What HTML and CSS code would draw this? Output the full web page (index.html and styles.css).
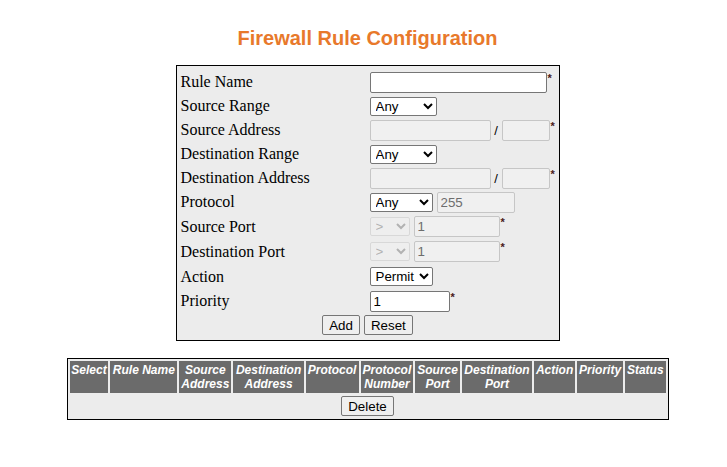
FILE: index.html
```html
<!DOCTYPE html>
<html>
<head>
<meta charset="utf-8">
<title>Firewall Rule Configuration</title>
<link rel="stylesheet" href="styles.css">
</head>
<body>
<h1 class="title">Firewall Rule Configuration</h1>
<table class="form">
  <tr><td class="lbl">Rule Name</td><td class="fld"><input type="text" class="in-name"><span class="req">*</span></td></tr>
  <tr><td class="lbl">Source Range</td><td class="fld"><select class="sel-any"><option>Any</option></select></td></tr>
  <tr><td class="lbl">Source Address</td><td class="fld"><input type="text" class="in-ip" disabled><span class="slash">/</span><input type="text" class="in-mask" disabled><span class="req">*</span></td></tr>
  <tr><td class="lbl">Destination Range</td><td class="fld"><select class="sel-any"><option>Any</option></select></td></tr>
  <tr><td class="lbl">Destination Address</td><td class="fld"><input type="text" class="in-ip" disabled><span class="slash">/</span><input type="text" class="in-mask" disabled><span class="req">*</span></td></tr>
  <tr><td class="lbl">Protocol</td><td class="fld"><select class="sel-proto"><option>Any</option></select><input type="text" class="in-proto" value="255" disabled></td></tr>
  <tr class="tall"><td class="lbl">Source Port</td><td class="fld"><select class="sel-op" disabled><option>&gt;</option></select><input type="text" class="in-port" value="1" disabled><span class="req">*</span></td></tr>
  <tr class="tall"><td class="lbl">Destination Port</td><td class="fld"><select class="sel-op" disabled><option>&gt;</option></select><input type="text" class="in-port" value="1" disabled><span class="req">*</span></td></tr>
  <tr class="tall"><td class="lbl">Action</td><td class="fld"><select class="sel-act"><option>Permit</option></select></td></tr>
  <tr><td class="lbl">Priority</td><td class="fld"><input type="text" class="in-prio" value="1"><span class="req">*</span></td></tr>
  <tr><td class="btns" colspan="2"><button class="btn">Add</button><button class="btn">Reset</button></td></tr>
</table>

<table class="list">
  <tr>
    <th>Select</th>
    <th>Rule Name</th>
    <th>Source<br>Address</th>
    <th>Destination<br>Address</th>
    <th>Protocol</th>
    <th>Protocol<br>Number</th>
    <th>Source<br>Port</th>
    <th>Destination<br>Port</th>
    <th>Action</th>
    <th>Priority</th>
    <th>Status</th>
  </tr>
  <tr><td class="list-btns" colspan="11"><button class="btn">Delete</button></td></tr>
</table>
</body>
</html>
```
FILE: styles.css
```css
html { background: #fff; }
body {
  margin: 8px 0 0 8px;
  font-family: "Liberation Serif", "Times New Roman", serif;
  font-size: 16px;
  color: #000;
}
.title {
  font-family: "Liberation Sans", Arial, sans-serif;
  font-size: 20px;
  font-weight: bold;
  color: #e8792b;
  text-align: center;
  margin: 19px 0 15px;
  line-height: 23px;
}
.form {
  margin: 0 auto;
  width: 384px;
  background: #ececec;
  border: 1px solid #000;
  border-collapse: separate;
  border-spacing: 0;
  padding: 4px 2px 3px;
}
.form td { padding: 0; height: 24px; vertical-align: middle; }
.form tr.tall td { height: 25px; }
.lbl { width: 189px; padding-left: 2px !important; }
.fld { white-space: nowrap; }
input, select, button {
  font-family: "Liberation Sans", Arial, sans-serif;
  font-size: 13.33px;
  box-sizing: border-box;
  vertical-align: middle;
  margin: 0;
}
input[type="text"] {
  height: 21px;
  border: 1px solid #767676;
  border-radius: 2px;
  padding: 1px 3px;
  background: #fff;
  color: #000;
}
input[type="text"]:disabled {
  background: #f0f0f0;
  border-color: #c6c6c6;
  color: #6d6d6d;
}
select {
  height: 19px;
  border: 1px solid #767676;
  border-radius: 2px;
  background: #fff;
  color: #000;
  padding: 0 0 0 1px;
}
select:disabled { border-color: #d0d0d0; color: #9a9a9a; background: #f0f0f0; }
.in-name { width: 177px; }
.in-ip { width: 121px; }
.in-mask { width: 48px; }
.slash { font-family: "Liberation Sans", Arial, sans-serif; font-size: 13px; display: inline-block; width: 11px; text-align: center; vertical-align: middle; }
.sel-any { width: 67px; }
.sel-proto { width: 63px; }
.in-proto { width: 78px; margin-left: 4px !important; }
.sel-op { width: 40px; }
.in-port { width: 86px; margin-left: 4px !important; }
.sel-act { width: 63px; }
.in-prio { width: 80px; }
.req {
  font-family: "Liberation Sans", Arial, sans-serif;
  font-size: 11px;
  font-weight: bold;
  color: #4a1a1a;
  vertical-align: 4px;
  margin-left: 1px;
}
.btns { text-align: center; }
.btn {
  height: 20px;
  padding: 1px 6px;
  border: 1px solid #767676;
  border-radius: 2px;
  background: #efefef;
  color: #000;
  margin: 0 2px;
}
.list {
  margin: 17px auto 0;
  width: 602px;
  border: 1px solid #000;
  border-collapse: separate;
  border-spacing: 2px;
  background: #ececec;
  font-family: "Liberation Sans", Arial, sans-serif;
}
.list th {
  background: #6b6b6b;
  color: #fff;
  font-size: 12px;
  font-weight: bold;
  font-style: italic;
  line-height: 14px;
  vertical-align: top;
  padding: 2px 1px 2px;
  height: 32px;
  box-sizing: border-box;
}
.list-btns { text-align: center; padding: 0; height: 22px; }
```
